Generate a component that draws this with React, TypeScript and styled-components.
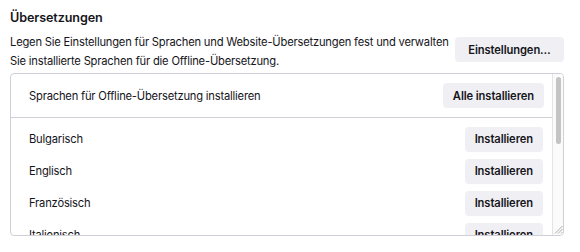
import styled, {createGlobalStyle} from 'styled-components'

const GlobalStyle = createGlobalStyle`
    body {
        margin: 0;
        background: #ffffff;
        color: #15141a;
        font-family: Inter, "Liberation Sans", sans-serif;
        font-size: 11.2px;
        letter-spacing: -0.2px;
    }
`;

const languages = [
    'Bulgarisch',
    'Englisch',
    'Französisch',
    'Italienisch',
    'Niederländisch',
    'Polnisch',
    'Portugiesisch',
    'Spanisch',
    'Tschechisch',
    'Ukrainisch',
];

const Page = styled.div`
    padding: 8px 16px 0 10px;
`;

const Title = styled.h2`
    margin: 0;
    font-size: 12.6px;
    font-weight: 600;
    line-height: 20px;
    letter-spacing: -0.1px;
`;

const IntroRow = styled.div`
    display: flex;
    align-items: flex-start;
    gap: 10px;
    margin-top: 5px;
`;

const Description = styled.p`
    flex: 1;
    min-width: 0;
    margin: 0;
    line-height: 19px;
    white-space: nowrap;
`;

const Button = styled.button`
    flex-shrink: 0;
    height: 25px;
    padding: 0 10px;
    border: none;
    border-radius: 4px;
    background: #f0f0f4;
    color: #15141a;
    font-family: inherit;
    font-size: 11.2px;
    font-weight: 600;
    letter-spacing: -0.1px;
    cursor: pointer;
    &:hover {
        background: #e0e0e6;
    }
`;

const SettingsButton = styled(Button)`
    margin-top: 4px;
    width: 109px;
`;

const LanguageBox = styled.div`
    display: flex;
    margin-top: 2px;
    height: 163px;
    box-sizing: border-box;
    border: 1px solid #cfcfd8;
    border-radius: 4px;
    overflow: hidden;
`;

const LanguageScroller = styled.div`
    flex: 1;
    min-width: 0;
    overflow: hidden;
`;

const ScrollTrack = styled.div`
    display: flex;
    flex-direction: column;
    align-items: center;
    width: 11px;
    padding: 3px 0 1px;
    box-sizing: border-box;
    border-left: 1px solid #e4e4e4;
    background: #fbfbfb;
`;

const ScrollThumb = styled.div`
    width: 5px;
    height: 67px;
    border-radius: 3px;
    background: #c4c4c4;
`;

const ResizeGrip = styled.svg`
    margin-top: auto;
    align-self: flex-end;
`;

const HeaderRow = styled.div`
    display: flex;
    align-items: center;
    justify-content: space-between;
    height: 43px;
    padding: 0 8px 0 18px;
    border-bottom: 1px solid #cfcfd8;
`;

const LanguageList = styled.ul`
    list-style: none;
    margin: 0;
    padding: 5px 0 0;
`;

const LanguageRow = styled.li`
    display: flex;
    align-items: center;
    justify-content: space-between;
    height: 32px;
    padding: 0 9px 0 18px;
`;

function App() {
    return (
        <>
            <GlobalStyle />
            <Page>
                <Title>Übersetzungen</Title>
                <IntroRow>
                    <Description>
                        Legen Sie Einstellungen für Sprachen und Website-Übersetzungen fest und verwalten<br />
                        Sie installierte Sprachen für die Offline-Übersetzung.
                    </Description>
                    <SettingsButton>Einstellungen…</SettingsButton>
                </IntroRow>
                <LanguageBox>
                    <LanguageScroller>
                        <HeaderRow>
                            <span>Sprachen für Offline-Übersetzung installieren</span>
                            <Button>Alle installieren</Button>
                        </HeaderRow>
                        <LanguageList>
                            {languages.map(lang => (
                                <LanguageRow key={lang}>
                                    <span>{lang}</span>
                                    <Button>Installieren</Button>
                                </LanguageRow>
                            ))}
                        </LanguageList>
                    </LanguageScroller>
                    <ScrollTrack>
                        <ScrollThumb />
                        <ResizeGrip width="9" height="9" viewBox="0 0 9 9">
                            <path d="M8.5 1 L1 8.5 M8.5 4 L4 8.5 M8.5 7 L7 8.5" stroke="#9a9a9a" strokeWidth="0.8" fill="none" />
                        </ResizeGrip>
                    </ScrollTrack>
                </LanguageBox>
            </Page>
        </>
    )
}

export default App
